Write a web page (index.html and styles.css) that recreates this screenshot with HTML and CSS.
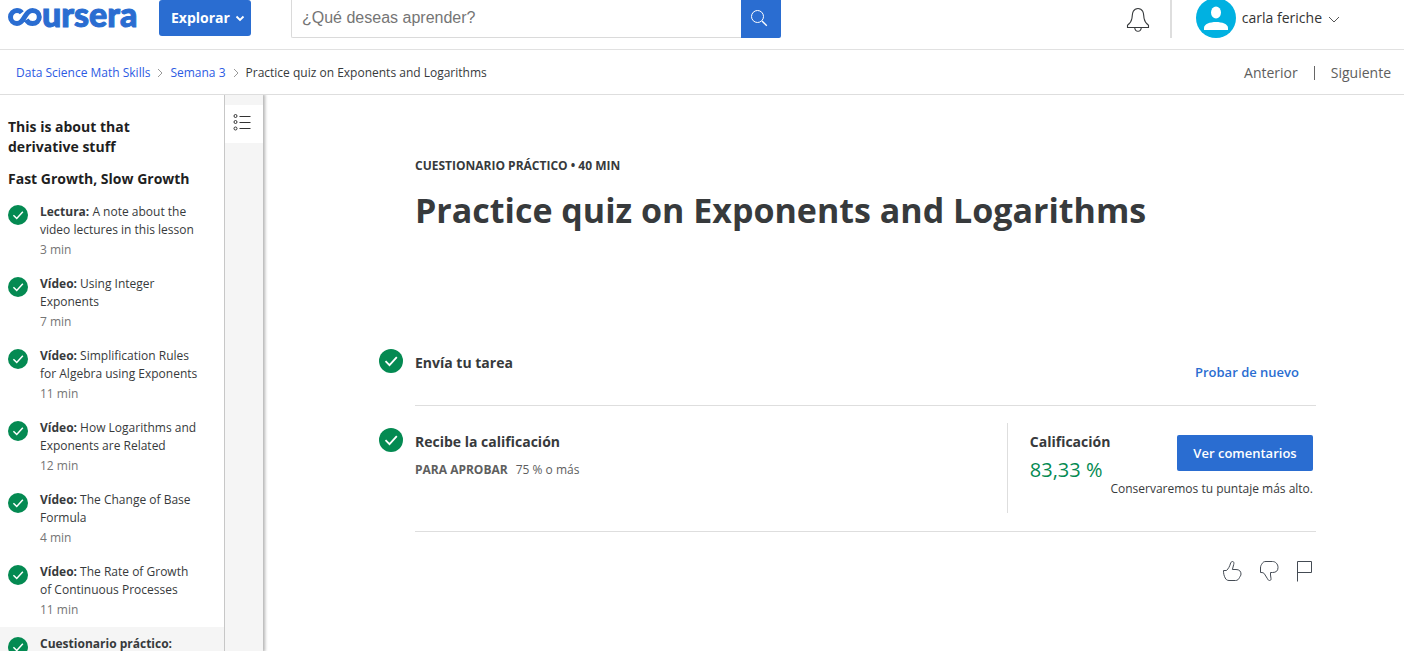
FILE: index.html
```html
<!DOCTYPE html>
<html lang="es">
<head>
<meta charset="utf-8">
<meta name="viewport" content="width=device-width, initial-scale=1">
<title>Practice quiz on Exponents and Logarithms | Coursera</title>
<link rel="stylesheet" href="styles.css">
</head>
<body>
<svg class="defs" aria-hidden="true">
  <symbol id="check" viewBox="0 0 24 24">
    <circle cx="12" cy="12" r="12" fill="#048a52"/>
    <path d="M6.5 12.2l4 4 7.300-8" fill="none" stroke="#fff" stroke-width="1.8"/>
  </symbol>
  <symbol id="chevron" viewBox="0 0 6 10">
    <path d="M1 1l4 4-4 4" fill="none" stroke="#999" stroke-width="1"/>
  </symbol>
</svg>
<div class="app">
  <header class="header">
    <a class="logo" href="#" aria-label="coursera">
      <svg class="logo-mark" viewBox="0 0 34 18" aria-hidden="true">
        <path d="M13.800 4.800C12.600 3.300 11 2.500 9 2.500C5.400 2.500 2.500 5.400 2.500 9S5.400 15.500 9 15.500C12.800 15.500 14.600 12.600 16.600 9C18.600 5.400 20.600 2.500 24.500 2.500C28.300 2.500 31.300 5.400 31.300 9S28.300 15.500 24.500 15.500C21.800 15.500 19.800 14.200 18.300 11.800" fill="none" stroke="#2a6dd1" stroke-width="5"/>
      </svg>
      <span class="logo-text">ursera</span>
    </a>
    <button class="explore" type="button">Explorar
      <svg viewBox="0 0 10 7" aria-hidden="true"><path d="M1.500 1.500L5 5l3.500-3.500" fill="none" stroke="#fff" stroke-width="1.800"/></svg>
    </button>
    <form class="search">
      <input type="text" placeholder="¿Qué deseas aprender?" aria-label="¿Qué deseas aprender?">
      <button type="button" aria-label="Buscar">
        <svg viewBox="0 0 18 18" aria-hidden="true"><circle cx="7.500" cy="7.500" r="6" fill="none" stroke="#fff"/><path d="M12 12l4.800 4.800" stroke="#fff" stroke-width="1.300"/></svg>
      </button>
    </form>
    <div class="account">
      <button class="bell" type="button" aria-label="Notificaciones">
        <svg viewBox="0 0 24 26" aria-hidden="true"><path d="M1.500 20.500h21v-2.300c-2.300-1.500-3.800-3.500-4.400-6.700-.5-2.500-.2-5.100-1.400-7.200C15.700 2.500 14.200 1.500 12 1.500S8.300 2.500 7.300 4.300c-1.200 2.100-.9 4.700-1.400 7.200-.6 3.200-2.100 5.200-4.400 6.700zM8.700 20.700c.3 2.300 1.500 3.600 3.300 3.600s3-1.300 3.300-3.600" fill="none" stroke="#373a3c" stroke-width="1.100"/></svg>
      </button>
      <button class="user" type="button">
        <svg class="avatar" viewBox="0 2 40 38" aria-hidden="true"><circle cx="20" cy="20" r="20" fill="#00b1e1"/><ellipse cx="20" cy="14.500" rx="5" ry="6" fill="#fff"/><path d="M8 32v-2c0-4 6-6 12-6s12 2 12 6v2z" fill="#fff"/></svg>
        <span>carla feriche</span>
        <svg class="caret" viewBox="0 0 12 7" aria-hidden="true"><path d="M1 1l5 5 5-5" fill="none" stroke="#555"/></svg>
      </button>
    </div>
  </header>

  <nav class="trail" aria-label="Ruta">
    <div class="crumbs">
      <a href="#">Data Science Math Skills</a>
      <svg aria-hidden="true"><use href="#chevron"/></svg>
      <a href="#">Semana 3</a>
      <svg aria-hidden="true"><use href="#chevron"/></svg>
      <span>Practice quiz on Exponents and Logarithms</span>
    </div>
    <div class="pager">
      <a href="#">Anterior</a>
      <a href="#">Siguiente</a>
    </div>
  </nav>

  <div class="body">
    <aside class="sidebar">
      <h2>This is about that derivative stuff</h2>
      <h2>Fast Growth, Slow Growth</h2>
      <ul class="lessons">
        <li><a href="#"><svg aria-hidden="true"><use href="#check"/></svg><span><b>Lectura:</b> A note about the video lectures in this lesson<small>3 min</small></span></a></li>
        <li><a href="#"><svg aria-hidden="true"><use href="#check"/></svg><span><b>Vídeo:</b> Using Integer Exponents<small>7 min</small></span></a></li>
        <li><a href="#"><svg aria-hidden="true"><use href="#check"/></svg><span><b>Vídeo:</b> Simplification Rules for Algebra using Exponents<small>11 min</small></span></a></li>
        <li><a href="#"><svg aria-hidden="true"><use href="#check"/></svg><span><b>Vídeo:</b> How Logarithms and Exponents are Related<small>12 min</small></span></a></li>
        <li><a href="#"><svg aria-hidden="true"><use href="#check"/></svg><span><b>Vídeo:</b> The Change of Base Formula<small>4 min</small></span></a></li>
        <li><a href="#"><svg aria-hidden="true"><use href="#check"/></svg><span><b>Vídeo:</b> The Rate of Growth of Continuous Processes<small>11 min</small></span></a></li>
        <li class="current"><a href="#"><svg aria-hidden="true"><use href="#check"/></svg><span><b>Cuestionario práctico:</b></span></a></li>
      </ul>
    </aside>
    <div class="rail">
      <button type="button" aria-label="Mostrar lista">
        <svg viewBox="0 0 18 18" aria-hidden="true"><g fill="none" stroke="#333"><circle cx="2.500" cy="3" r="1.500"/><circle cx="2.500" cy="9" r="1.500"/><circle cx="2.500" cy="15.500" r="1.500"/><path d="M6.500 3.500h11M6.500 9.500h11M6.500 15.500h11"/></g></svg>
      </button>
    </div>
    <main class="main">
      <p class="kicker">CUESTIONARIO PRÁCTICO • 40 MIN</p>
      <h1>Practice quiz on Exponents and Logarithms</h1>
      <section class="step submit">
        <svg class="done" aria-hidden="true"><use href="#check"/></svg>
        <h3>Envía tu tarea</h3>
        <a class="retry" href="#">Probar de nuevo</a>
      </section>
      <section class="step result">
        <svg class="done" aria-hidden="true"><use href="#check"/></svg>
        <div class="receive">
          <h3>Recibe la calificación</h3>
          <p><b>PARA APROBAR</b><span>75 % o más</span></p>
        </div>
        <div class="grade">
          <div>
            <h3>Calificación</h3>
            <p class="score">83,33 %</p>
          </div>
          <div class="feedback">
            <button type="button">Ver comentarios</button>
            <p>Conservaremos tu puntaje más alto.</p>
          </div>
        </div>
      </section>
      <div class="rate">
        <button type="button" aria-label="Me gusta"><svg viewBox="0 0 20 22"><path d="M1.500 10.500H4.500C6.500 8.500 7.600 6.500 8.300 4C8.800 2.300 9.500 1.500 10.500 1.500C11.900 1.500 12.100 3 11.700 4.500L10.400 9.500H14C17.500 9.500 19 11.500 19 14C19 15.500 18 16.500 17.500 17.500C16.500 19.500 15.500 20.500 13.500 20.500H7C5 20.500 4 19.500 3.200 18C2 15.500 1.500 14 1.500 10.500Z"/></svg></button>
        <button type="button" aria-label="No me gusta"><svg viewBox="0 0 20 22"><path d="M1.500 12.500V8C1.500 6 2.200 5 3 3.800C4 2 5 1.500 7 1.500H13.500C16.500 1.500 19 4 19 7.500C19 11 17 12.500 13.500 12.500H11.500V15L12 18.500C12.200 20 11.500 20.500 10.500 20.500C9.500 20.500 9 19.800 8.500 18.800L5.500 14C4.700 12.800 4 12.500 1.500 12.500Z"/></svg></button>
        <button type="button" aria-label="Informar de un problema"><svg viewBox="0 0 20 22"><path d="M1.500 21.500V1.500H15.500V12.500H1.500"/></svg></button>
      </div>
    </main>
  </div>
</div>
</body>
</html>
```
FILE: styles.css
```css
* { box-sizing: border-box; }
body {
  margin: 0;
  background: #fff;
  color: #373a3c;
  font: 14px/20px "Open Sans", "Noto Sans", sans-serif;
}
h1, h2, h3, p, ul { margin: 0; padding: 0; }
button {
  margin: 0;
  padding: 0;
  border: 0;
  background: none;
  color: inherit;
  font: inherit;
  cursor: pointer;
}
a { color: inherit; text-decoration: none; }
svg { display: block; flex: none; }
.defs { position: absolute; width: 0; height: 0; }
.app {
  display: flex;
  flex-direction: column;
  height: 100vh;
  overflow: hidden;
}

/* Top bar */
.header {
  display: flex;
  align-items: flex-start;
  flex: none;
  height: 50px;
  padding-left: 8px;
  border-bottom: 1px solid #e1e1e1;
}
.logo {
  display: flex;
  align-items: flex-start;
  flex: none;
  width: 128px;
  margin-right: 23px;
  color: #2a6dd1;
}
.logo-mark { width: 34px; height: 18px; margin-top: 8px; }
.logo-text {
  font: 900 34px/28px Lato, sans-serif;
  -webkit-text-stroke: 1px #2a6dd1;
}
.explore {
  display: flex;
  align-items: center;
  gap: 5px;
  width: 92px;
  height: 36px;
  margin-right: 40px;
  padding-left: 12px;
  border-radius: 3px;
  background: #2a6dd1;
  color: #fff;
  font-weight: 700;
}
.explore svg { width: 10px; height: 7px; }
.search { display: flex; flex: 0 1 490px; height: 38px; }
.search input {
  flex: 1;
  min-width: 0;
  padding: 0 10px 2px;
  border: 1px solid #dadada;
  border-top: 0;
  border-right: 0;
  border-radius: 0 0 0 2px;
  font: 16px/20px "Liberation Sans", Arial, sans-serif;
}
.search input::placeholder { color: #757575; opacity: 1; }
.search button {
  display: grid;
  place-items: center;
  width: 40px;
  padding: 0 4px 2px 0;
  border-radius: 0 0 2px 0;
  background: #2a6dd1;
}
.search svg { width: 18px; height: 18px; }
.account {
  display: flex;
  height: 38px;
  margin-left: auto;
  margin-right: 64px;
}
.bell {
  padding: 0 20px;
  border-right: 2px solid #dedede;
}
.bell svg { width: 24px; height: 26px; margin-top: 2px; }
.user {
  display: flex;
  align-items: center;
  gap: 6px;
  padding-left: 24px;
  color: #333;
}
.user span { padding-bottom: 2px; }
.avatar { width: 40px; height: 38px; }
.caret { width: 12px; height: 7px; }

/* Breadcrumb bar */
.trail {
  display: flex;
  align-items: center;
  justify-content: space-between;
  flex: none;
  height: 45px;
  padding: 2px 13px 0 16px;
  border-bottom: 1px solid #dedede;
}
.crumbs { display: flex; align-items: center; gap: 7px; font-size: 12px; }
.crumbs a { color: #2d5be3; }
.crumbs svg { width: 6px; height: 10px; }
.pager { display: flex; align-items: center; color: #5e5e5e; }
.pager a + a {
  margin-left: 16px;
  padding-left: 16px;
  border-left: 1px solid #666;
  line-height: 14px;
}

/* Lesson list */
.body { display: flex; flex: 1; min-height: 0; }
.sidebar {
  flex: 0 0 225px;
  padding-top: 22px;
  border-right: 1px solid #c7c7c7;
  overflow: hidden;
}
.sidebar h2 {
  margin-bottom: 12px;
  padding: 0 64px 0 8px;
  color: #1f1f1f;
  font-size: 14px;
  line-height: 20px;
}
.sidebar h2 + h2 { margin-bottom: 6px; padding-right: 8px; }
.lessons { list-style: none; font-size: 12px; line-height: 18px; }
.lessons a { display: flex; gap: 12px; padding: 8px 24px 8px 8px; }
.lessons svg { width: 20px; height: 20px; margin-top: 2px; }
.lessons small {
  display: block;
  margin-top: 2px;
  color: #757575;
  font-size: 12px;
}
.lessons .current { background: #f5f5f5; }
.lessons .current a { padding-bottom: 40px; }
.rail {
  z-index: 1;
  flex: 0 0 38px;
  padding-top: 10px;
  background: #f5f5f5;
  box-shadow: 1px 0 3px 1px #b4b4b4;
  clip-path: inset(0 -6px 0 0);
}
.rail button {
  display: grid;
  place-items: center;
  width: 100%;
  height: 38px;
  padding: 0 4px 4px 0;
  background: #fff;
}
.rail svg { width: 18px; height: 18px; }

/* Quiz summary */
.main { flex: 1; min-width: 0; padding: 61px 88px 0 152px; }
.kicker { font-size: 12px; font-weight: 700; }
h1 {
  margin-top: 10px;
  font-size: 34px;
  font-weight: 700;
  line-height: 48px;
}
h3 { font-size: 14px; line-height: 20px; }
.step { display: flex; border-bottom: 1px solid #dedede; }
.done { width: 24px; height: 24px; margin: 0 12px 0 -36px; }
.submit {
  margin-top: 115px;
  padding: 0 17px 23px 0;
}
.submit h3 { margin: 4px auto 0 0; }
.retry {
  margin-top: 13px;
  color: #2a6dd1;
  font-size: 13px;
  font-weight: 600;
}
.result { padding: 17px 3px 18px 0; }
.result .done { margin-top: 5px; }
.receive { flex: 1; padding-top: 9px; }
.receive p {
  display: flex;
  gap: 8px;
  margin-top: 8px;
  color: #5e5e5e;
  font-size: 12px;
}
.grade {
  display: flex;
  min-height: 90px;
  padding: 9px 0 0 22px;
  border-left: 1px solid #dedede;
}
.score {
  margin-top: 4px;
  color: #048a52;
  font-size: 20px;
  line-height: 28px;
}
.feedback {
  display: flex;
  flex-direction: column;
  align-items: flex-end;
  gap: 8px;
  padding-top: 3px;
  font-size: 12px;
}
.feedback button {
  width: 136px;
  height: 36px;
  border-radius: 2px;
  background: #2a6dd1;
  color: #fff;
  font-size: 13px;
  font-weight: 600;
}
.rate {
  display: flex;
  justify-content: flex-end;
  gap: 17px;
  margin-top: 28px;
}
.rate svg {
  width: 20px;
  height: 22px;
  fill: none;
  stroke: #444b54;
  stroke-width: 1;
}
```
